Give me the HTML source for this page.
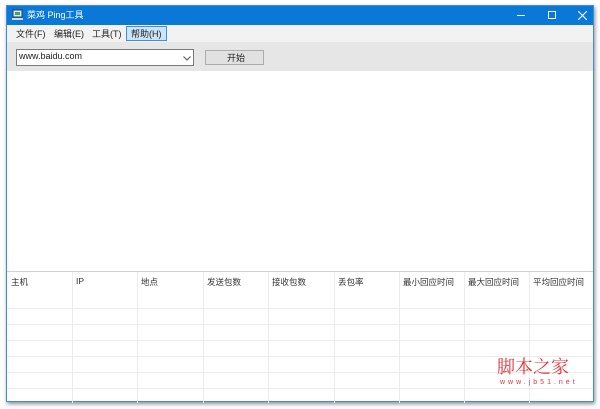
<!DOCTYPE html>
<html><head><meta charset="utf-8"><style>
*{margin:0;padding:0;box-sizing:border-box}
body{width:600px;height:409px;background:#fff;position:relative;overflow:hidden;font-family:"Liberation Sans","Noto Sans CJK SC",sans-serif;font-size:9px;color:#222}
.win{position:absolute;left:6px;top:5px;width:588px;height:397px;border:1px solid #3b8fdc;box-shadow:1px 2px 4px rgba(0,0,0,.45);background:#fff}
.title{position:absolute;left:0;top:0;width:100%;height:19px;background:#0a78d7;color:#fff}
.title span{position:absolute;left:20px;top:2px;font-size:9px}
.menu{position:absolute;top:19px;left:0;width:100%;height:17px;background:#f2f2f2}
.menu span{position:absolute;top:2px}
.tool{position:absolute;top:36px;left:0;width:100%;height:29px;background:#e6e6e6}
.abs{position:absolute}
.th{position:absolute;top:270px;font-size:8.5px;color:#333}
.vl{position:absolute;top:266px;width:1px;height:131px;background:#ececec}
.hl{position:absolute;left:0;width:100%;height:1px;background:#ececec}
</style></head><body>
<div class="win">
<div class="title">
<svg class="abs" style="left:5px;top:3px" width="11" height="12"><rect x="1" y="1" width="9" height="7" fill="#dfe9f0" stroke="#335"/><rect x="3" y="3" width="5" height="3" fill="#3a6"/><rect x="0" y="9" width="11" height="2" fill="#cde"/></svg>
<span>菜鸡 Ping工具</span>
<div class="abs" style="left:510px;top:9px;width:8px;height:1px;background:#fff"></div>
<div class="abs" style="left:541px;top:5px;width:8px;height:8px;border:1px solid #fff"></div>
<svg class="abs" style="left:571px;top:5px" width="9" height="9"><path d="M0 0L9 9M9 0L0 9" stroke="#fff" stroke-width="1.1"/></svg>
</div>
<div class="menu">
<span style="left:9px">文件(F)</span><span style="left:47px">编辑(E)</span><span style="left:85px">工具(T)</span>
<div class="abs" style="left:119px;top:1px;width:41px;height:15px;background:#cce4f7;border:1px solid #3d8fd6"></div>
<span style="left:124px">帮助(H)</span>
</div>
<div class="tool">
<div class="abs" style="left:9px;top:7px;width:178px;height:17px;background:#fff;border:1px solid #7a7a7a"></div>
<span class="abs" style="left:12px;top:9px">www.baidu.com</span>
<svg class="abs" style="left:176px;top:14px" width="8" height="5"><path d="M0.5 0.5L4 4L7.5 0.5" stroke="#555" fill="none"/></svg>
<div class="abs" style="left:198px;top:8px;width:59px;height:15px;background:#e1e1e1;border:1px solid #adadad"></div>
<span class="abs" style="left:220px;top:9px">开始</span>
</div>
<div class="abs" style="left:0;top:265px;width:100%;height:1px;background:#d0d0d0"></div>
<div class="th" style="left:4px">主机</div><div class="th" style="left:69px">IP</div><div class="th" style="left:134px">地点</div><div class="th" style="left:200px">发送包数</div><div class="th" style="left:265px">接收包数</div><div class="th" style="left:331px">丢包率</div><div class="th" style="left:396px">最小回应时间</div><div class="th" style="left:461px">最大回应时间</div><div class="th" style="left:526px">平均回应时间</div>
<div class="vl" style="left:65px"></div><div class="vl" style="left:130px"></div><div class="vl" style="left:196px"></div><div class="vl" style="left:261px"></div><div class="vl" style="left:327px"></div><div class="vl" style="left:392px"></div><div class="vl" style="left:457px"></div><div class="vl" style="left:522px"></div>
<div class="hl" style="top:302px"></div><div class="hl" style="top:318px"></div><div class="hl" style="top:334px"></div><div class="hl" style="top:350px"></div><div class="hl" style="top:366px"></div><div class="hl" style="top:382px"></div>
<div class="abs" style="left:490px;top:347px;font-size:18px;color:#e8333a;font-family:'Noto Serif CJK SC',serif;letter-spacing:0px">脚本之家</div>
<div class="abs" style="left:493px;top:373px;font-size:7px;color:#e8333a;letter-spacing:3px">www.jb51.net</div>
</div>
</body></html>
